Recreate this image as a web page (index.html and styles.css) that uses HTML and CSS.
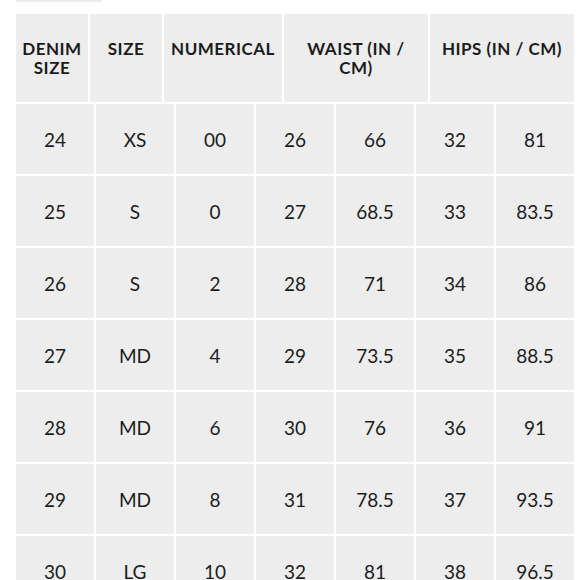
FILE: index.html
```html
<!DOCTYPE html>
<html>
<head>
<meta charset="utf-8">
<link rel="stylesheet" href="styles.css">
</head>
<body>
<div class="page">
  <div class="topbar"></div>
  <div class="head">
    <div class="hcell">DENIM<br>SIZE</div>
    <div class="hcell">SIZE</div>
    <div class="hcell">NUMERICAL</div>
    <div class="hcell">WAIST (IN /<br>CM)</div>
    <div class="hcell">HIPS (IN / CM)</div>
  </div>
  <div class="grid">
    <div class="cell">24</div><div class="cell">XS</div><div class="cell">00</div><div class="cell">26</div><div class="cell">66</div><div class="cell">32</div><div class="cell">81</div>
    <div class="cell">25</div><div class="cell">S</div><div class="cell">0</div><div class="cell">27</div><div class="cell">68.5</div><div class="cell">33</div><div class="cell">83.5</div>
    <div class="cell">26</div><div class="cell">S</div><div class="cell">2</div><div class="cell">28</div><div class="cell">71</div><div class="cell">34</div><div class="cell">86</div>
    <div class="cell">27</div><div class="cell">MD</div><div class="cell">4</div><div class="cell">29</div><div class="cell">73.5</div><div class="cell">35</div><div class="cell">88.5</div>
    <div class="cell">28</div><div class="cell">MD</div><div class="cell">6</div><div class="cell">30</div><div class="cell">76</div><div class="cell">36</div><div class="cell">91</div>
    <div class="cell">29</div><div class="cell">MD</div><div class="cell">8</div><div class="cell">31</div><div class="cell">78.5</div><div class="cell">37</div><div class="cell">93.5</div>
    <div class="cell">30</div><div class="cell">LG</div><div class="cell">10</div><div class="cell">32</div><div class="cell">81</div><div class="cell">38</div><div class="cell">96.5</div>
  </div>
</div>
</body>
</html>
```

FILE: styles.css
```css
html, body {
  margin: 0;
  padding: 0;
  background: #ffffff;
  overflow: hidden;
}
.page {
  padding-left: 16px;
  font-family: Lato, "Liberation Sans", sans-serif;
  color: #1c1c1c;
}
.topbar {
  width: 86px;
  height: 2px;
  background: #ececec;
  margin-bottom: 12px;
}
.head {
  display: grid;
  grid-template-columns: 72px 72px 118px 144px 144px;
  column-gap: 2px;
  height: 88px;
  margin-bottom: 2px;
}
.hcell {
  background: #ededed;
  text-align: center;
  font-weight: 700;
  font-size: 17px;
  line-height: 19px;
  letter-spacing: 0.5px;
  padding-top: 25px;
  box-sizing: border-box;
}
.grid {
  display: grid;
  grid-template-columns: repeat(7, 78px);
  grid-auto-rows: 70px;
  gap: 2px;
}
.cell {
  background: #ededed;
  display: flex;
  align-items: center;
  justify-content: center;
  font-size: 19px;
  font-weight: 400;
}
```
